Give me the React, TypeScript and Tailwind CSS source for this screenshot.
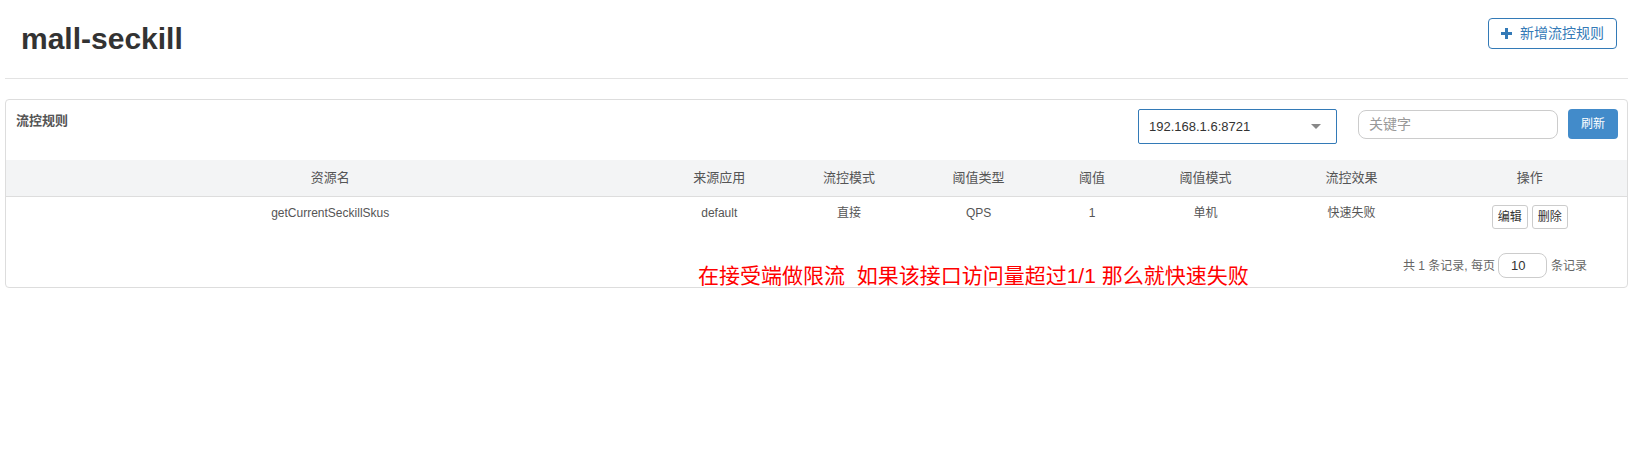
const cols = [
  { name: '资源名', w: 'w-[40%]' },
  { name: '来源应用', w: 'w-[8%]' },
  { name: '流控模式', w: 'w-[8%]' },
  { name: '阈值类型', w: 'w-[8%]' },
  { name: '阈值', w: 'w-[6%]' },
  { name: '阈值模式', w: 'w-[8%]' },
  { name: '流控效果', w: 'w-[10%]' },
  { name: '操作', w: 'w-[12%]' },
];

const row = ['getCurrentSeckillSkus', 'default', '直接', 'QPS', '1', '单机', '快速失败'];

export default function App() {
  return (
    <div className="w-[1637px] h-[456px] bg-white px-[5px] font-['Liberation_Sans','Noto_Sans_CJK_SC',sans-serif] text-[#333]">
      {/* page header */}
      <div className="flex items-start justify-between w-[1623px] h-[79px] border-b border-[#e3e3e3]">
        <h1 className="mt-[22px] pl-[16px] text-[30px] leading-[34px] font-bold text-[#333]">mall-seckill</h1>
        <button className="mt-[18px] mr-[11px] flex items-center gap-[8px] h-[31px] px-[12px] border border-[#337ab7] rounded-[4px] text-[#337ab7] text-[14px] bg-white">
          <svg width="11" height="11" viewBox="0 0 11 11" fill="#337ab7">
            <rect x="4" y="0" width="3" height="11" />
            <rect x="0" y="4" width="11" height="3" />
          </svg>
          新增流控规则
        </button>
      </div>

      {/* card */}
      <div className="relative mt-[20px] w-[1623px] border border-[#ddd] rounded-[4px]">
        <div className="flex items-start justify-between h-[60px] pl-[10px] pr-[9px] pt-[9px]">
          <span className="mt-[3px] text-[13px] leading-[18px] font-bold text-[#555]">流控规则</span>
          <div className="flex items-start">
            <div className="flex items-center justify-between w-[199px] h-[35px] pl-[10px] pr-[15px] border border-[#337ab7] rounded-[2px] text-[13px] text-[#333]">
              <span>192.168.1.6:8721</span>
              <span className="w-0 h-0 border-l-[5px] border-r-[5px] border-t-[5px] border-l-transparent border-r-transparent border-t-[#888]"></span>
            </div>
            <div className="ml-[21px] mt-[1px] flex items-center w-[200px] h-[29px] px-[10px] border border-[#ccc] rounded-[8px] text-[14px] text-[#999]">
              关键字
            </div>
            <button className="ml-[10px] w-[50px] h-[30px] rounded-[4px] bg-[#428bca] text-white text-[12px]">
              刷新
            </button>
          </div>
        </div>

        <table className="w-full table-fixed border-collapse text-[12px]">
          <thead>
            <tr className="h-[36px] bg-[#f3f4f5] border-b border-[#ddd]">
              {cols.map((c) => (
                <th key={c.name} className={`${c.w} font-normal text-[13px] text-[#555]`}>
                  {c.name}
                </th>
              ))}
            </tr>
          </thead>
          <tbody>
            <tr className="h-[37px]">
              {row.map((v, i) => (
                <td key={i} className="text-center text-[#555] align-top pt-[8px] leading-[16px]">
                  {v}
                </td>
              ))}
              <td className="align-top pt-[8px]">
                <div className="flex justify-center gap-[4px]">
                  <button className="w-[36px] h-[24px] border border-[#ccc] rounded-[3px] bg-white text-[12px] text-[#333]">编辑</button>
                  <button className="w-[36px] h-[24px] border border-[#ccc] rounded-[3px] bg-white text-[12px] text-[#333]">删除</button>
                </div>
              </td>
            </tr>
          </tbody>
        </table>

        <div className="flex items-center justify-end h-[25px] mt-[20px] mb-[9px] pr-[40px] text-[12px] text-[#666]">
          <span>共 1 条记录, 每页</span>
          <div className="ml-[3px] mr-[4px] flex items-center w-[49px] h-[25px] pl-[12px] border border-[#ccc] rounded-[8px] text-[13px] text-[#333]">10</div>
          <span>条记录</span>
        </div>

        <div className="absolute left-[692px] top-[163px] text-[21px] leading-[25px] text-[#ff0000] whitespace-pre">
          在接受端做限流  如果该接口访问量超过1/1 那么就快速失败
        </div>
      </div>
    </div>
  );
}
